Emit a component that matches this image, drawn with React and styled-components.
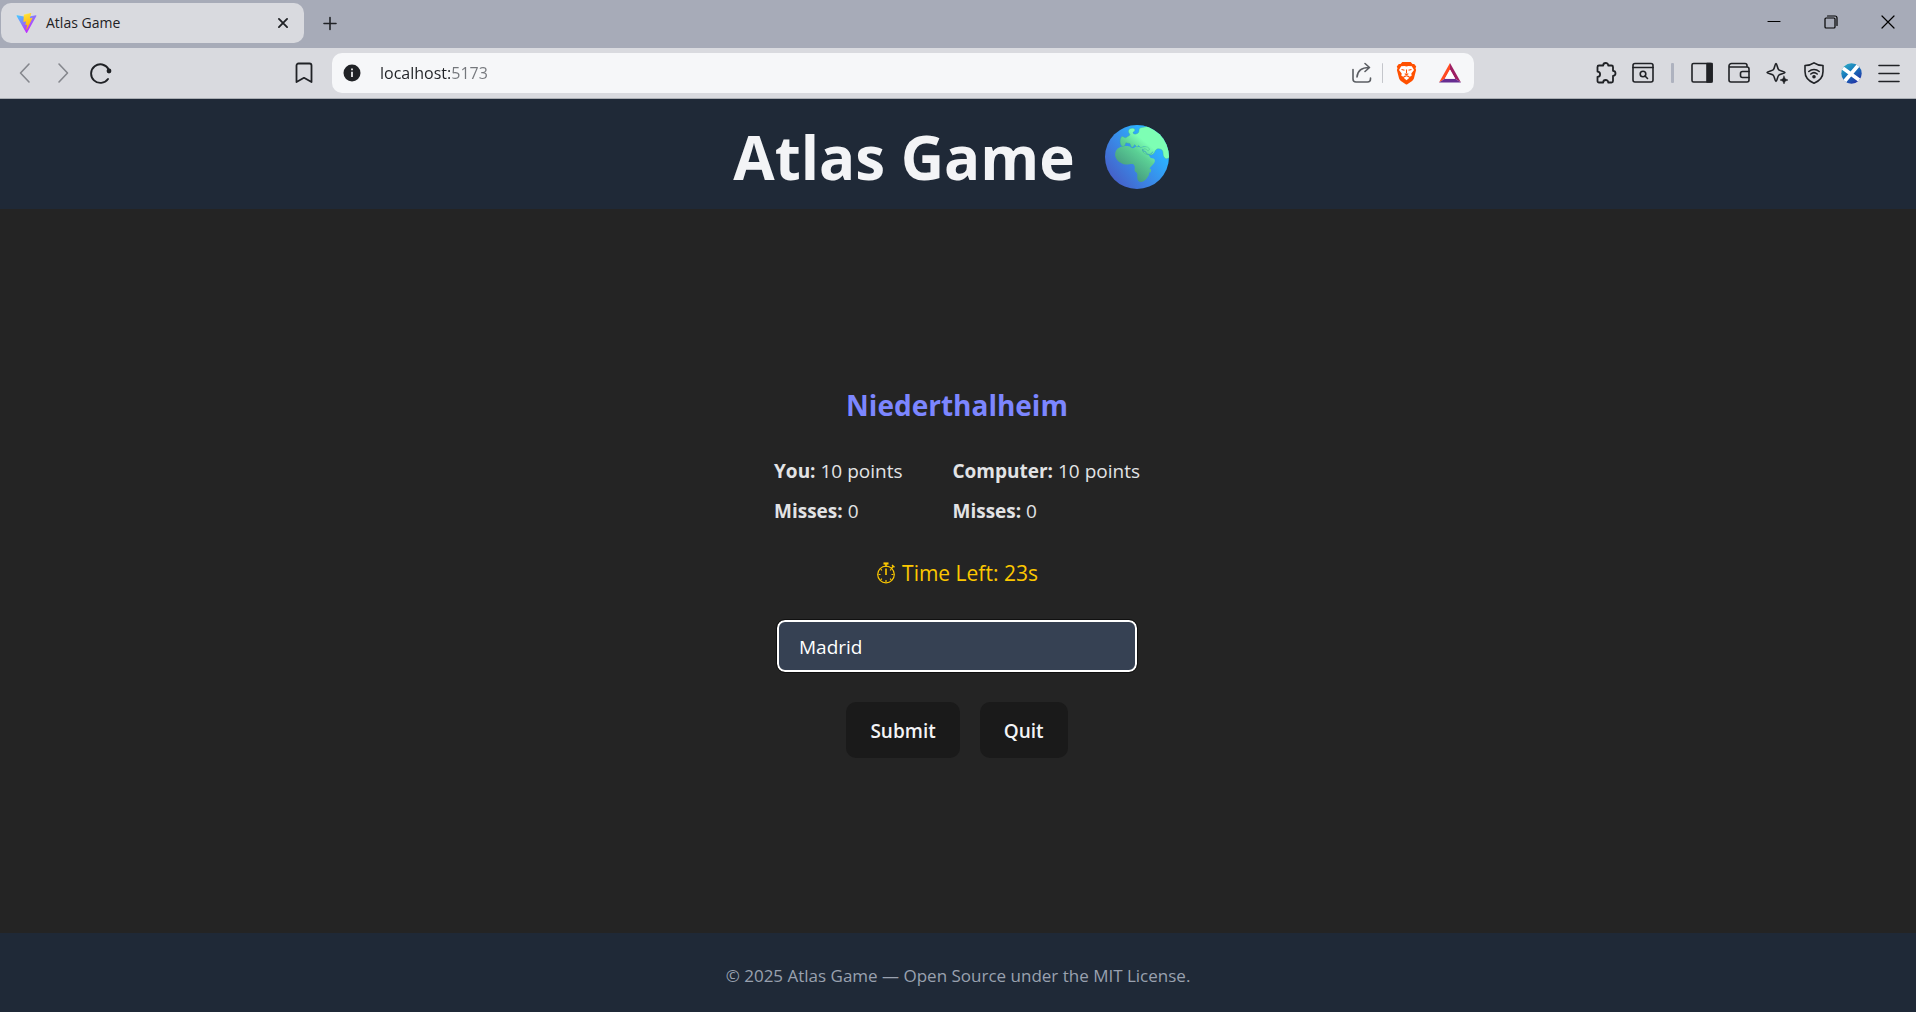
import React, { useState } from "react";
import styled, { createGlobalStyle } from "styled-components";

const GlobalStyle = createGlobalStyle`
  * { box-sizing: border-box; }
  body {
    margin: 0;
    background: #242424;
    color: #e2e3e5;
    font-family: "Open Sans", "Noto Sans", sans-serif;
    font-size: 19px;
    line-height: 30px;
  }
  button, input { font-family: inherit; }
`;

const Window = styled.div`
  display: flex;
  flex-direction: column;
  min-height: 100vh;
`;

/* ---------- browser chrome ---------- */

const TabStrip = styled.div`
  display: flex;
  align-items: center;
  height: 48px;
  padding-left: 1px;
  background: #a7abb8;
`;

const Tab = styled.div`
  display: flex;
  align-items: center;
  gap: 9px;
  width: 303px;
  height: 40px;
  margin-bottom: 2px;
  padding: 0 11px 0 15px;
  border-radius: 10px;
  background: #d9dadf;
`;

const TabTitle = styled.span`
  flex: 1;
  color: #1f2124;
  font-size: 14px;
  line-height: 20px;
`;

const IconButton = styled.button`
  display: flex;
  align-items: center;
  justify-content: center;
  flex: ${(p) => (p.$width ? "none" : "1")};
  width: ${(p) => (p.$width ? `${p.$width}px` : "auto")};
  height: 32px;
  padding: 0;
  border: 0;
  background: none;
  color: ${(p) => p.$color || "#202226"};
  cursor: pointer;
  svg { display: block; }
`;

const WindowControls = styled.div`
  display: flex;
  margin: 0 0 4px auto;
`;

const Toolbar = styled.div`
  display: flex;
  align-items: center;
  height: 51px;
  border-bottom: 1px solid #a9adb3;
  background: #d9dadf;
`;

const LeftTools = styled.div`
  display: flex;
  justify-content: space-between;
  width: 332px;
  padding: 0 10px 0 6px;
`;

const RightTools = styled.div`
  display: flex;
  align-items: center;
  justify-content: flex-end;
  width: 442px;
  padding-right: 8px;
`;

const ToolGroup = styled.div`
  display: flex;
  width: ${(p) => p.$width}px;
`;

const AddressBar = styled.div`
  display: flex;
  flex: 1;
  align-items: center;
  height: 40px;
  padding: 0 2px;
  border-radius: 10px;
  background: #f6f7f9;
`;

const AddressInput = styled.input`
  flex: 1;
  min-width: 0;
  padding: 0 0 0 10px;
  border: 0;
  outline: 0;
  background: linear-gradient(90deg, #202226 80px, #74777c 80px);
  -webkit-background-clip: text;
  background-clip: text;
  color: transparent;
  font-size: 16px;
  line-height: 24px;
`;

const Divider = styled.span`
  width: ${(p) => (p.$thick ? 3 : 1)}px;
  height: 20px;
  margin: 0 ${(p) => (p.$thick ? 9 : 1)}px;
  border-radius: 1px;
  background: ${(p) => (p.$thick ? "#aeb2bf" : "#c4c6cb")};
`;

/* ---------- page ---------- */

const Header = styled.header`
  display: flex;
  align-items: center;
  justify-content: center;
  padding: 18px 20px 12px;
  background: #1f2937;
`;

const Title = styled.h1`
  display: flex;
  align-items: center;
  gap: 30px;
  margin: 0;
  padding-right: 14px;
  color: #f3f4f6;
  font-size: 60px;
  font-weight: 700;
  line-height: 80px;
  svg { display: block; }
`;

const Main = styled.main`
  display: flex;
  flex: 1;
  flex-direction: column;
  align-items: center;
  justify-content: center;
  padding-right: 2px;
`;

const Game = styled.form`
  display: flex;
  flex-direction: column;
  align-items: center;
  gap: 30px;
`;

const Place = styled.h2`
  margin: 0;
  color: #7c86ff;
  font-size: 28px;
  font-weight: 700;
  line-height: 42px;
`;

const Scores = styled.div`
  display: flex;
  gap: 50px;
`;

const Player = styled.div`
  display: flex;
  flex-direction: column;
  gap: 10px;
`;

const Stat = styled.p`
  margin: 0;
`;

const Timer = styled.p`
  display: flex;
  align-items: center;
  gap: 6px;
  margin: 0;
  color: #fcc800;
  font-size: 21px;
  line-height: 34px;
`;

const Answer = styled.input`
  width: 360px;
  height: 52px;
  padding: 2px 20px 0;
  border: 2px solid #ffffff;
  border-radius: 8px;
  outline: 1px solid #101010;
  background: #364153;
  color: #ffffff;
  font-size: 19px;
`;

const Actions = styled.div`
  display: flex;
  gap: 20px;
`;

const ActionButton = styled.button`
  height: 56px;
  padding: 2px 24px 0;
  border: 0;
  border-radius: 10px;
  background: #1a1a1a;
  color: #f3f4f6;
  font-size: 19px;
  font-weight: 600;
  cursor: pointer;
`;

const Footer = styled.footer`
  padding: 28px 20px 21px;
  background: #1f2937;
  color: #99a1af;
  font-size: 17px;
  text-align: center;
`;

/* ---------- drawings ---------- */

const Line = ({ size = 22, width = 1.6, children }) => (
  <svg width={size} height={size} viewBox="0 0 22 22" fill="none" stroke="currentColor" strokeWidth={width} strokeLinecap="round" strokeLinejoin="round" aria-hidden="true">
    {children}
  </svg>
);

const ViteLogo = () => (
  <svg width="21" height="20" viewBox="0 0 256 257" aria-hidden="true">
    <defs>
      <linearGradient id="viteBody" x1="0" y1="0" x2="0.6" y2="0.8">
        <stop offset="0" stopColor="#41d1ff" />
        <stop offset="1" stopColor="#bd34fe" />
      </linearGradient>
      <linearGradient id="viteBolt" x1="0.4" y1="0" x2="0.6" y2="1">
        <stop offset="0" stopColor="#ffea83" />
        <stop offset="0.1" stopColor="#ffdd35" />
        <stop offset="1" stopColor="#ffa800" />
      </linearGradient>
    </defs>
    <path fill="url(#viteBody)" d="M255.153 37.938 134.897 252.976c-2.483 4.44-8.862 4.466-11.382.048L.875 37.958c-2.746-4.814 1.371-10.646 6.827-9.67l120.385 21.517a6.537 6.537 0 0 0 2.322-.004l117.867-21.483c5.438-.991 9.574 4.796 6.877 9.62Z" />
    <path fill="url(#viteBolt)" d="M185.432.063 96.44 17.501a3.268 3.268 0 0 0-2.634 3.014l-5.474 92.456a3.268 3.268 0 0 0 3.997 3.378l24.777-5.718c2.318-.535 4.413 1.507 3.936 3.838l-7.361 36.047c-.495 2.426 1.782 4.5 4.151 3.78l15.304-4.649c2.372-.72 4.652 1.36 4.15 3.788l-11.698 56.621c-.732 3.542 3.979 5.473 5.943 2.437l1.313-2.028 72.516-144.72c1.215-2.423-.88-5.186-3.54-4.672l-25.505 4.922c-2.396.462-4.435-1.77-3.759-4.114l16.646-57.705c.677-2.35-1.37-4.583-3.769-4.113Z" />
  </svg>
);

const BraveLogo = () => (
  <svg width="21" height="24" viewBox="0 0 21 24" aria-hidden="true">
    <path fill="#ff5000" d="M6.3 1h8.4l1.8 2 1.7-.1 2 2.5-.7 1.8.6 1.9-2.2 8.5c-.3 1-1 1.8-1.8 2.4L11.3 23.3c-.5.3-1.1.3-1.6 0L4.9 20c-.9-.6-1.5-1.4-1.8-2.4L.9 9.1l.6-1.9L.8 5.4l2-2.5 1.7.1z" />
    <path fill="#fff" d="m10.5 5.6 2-.5 3.3.2 2.2 3.7-2.7 3.500.4 2.200-2 1.100-1.700-1.200h-3l-1.700 1.200-2-1.100.4-2.200L3 9l2.200-3.700 3.300-.2zm0 9.600 2.900 1.600-2.900 2.500-2.900-2.500z" />
    <path d="m5.500 8.500 3 .8M15.500 8.500l-3 .8M10.500 8.500v4M8.700 12.600l1.800 1.200 1.800-1.200" fill="none" stroke="#ff5000" strokeWidth="1.100" />
  </svg>
);

const BatLogo = () => (
  <svg width="22" height="20" viewBox="0 0 22 20" aria-hidden="true">
    <path fill="#ff4a22" d="M11 0v6.500L5.800 15.800 0 19.500z" />
    <path fill="#9e1f63" d="M11 0v6.500l5.200 9.300 5.800 3.700z" />
    <path fill="#662d91" d="M0 19.500 5.800 15.800h10.400l5.800 3.700z" />
    <path fill="#fff" d="m11 6.500 5.200 9.300H5.800z" />
  </svg>
);

const SaltireLogo = () => (
  <svg width="21" height="21" viewBox="0 0 21 21" aria-hidden="true">
    <defs>
      <linearGradient id="saltire" x1="0" y1="0" x2="0.7" y2="1">
        <stop offset="0" stopColor="#35b9c9" />
        <stop offset="0.5" stopColor="#1678bb" />
        <stop offset="1" stopColor="#2432a6" />
      </linearGradient>
      <clipPath id="saltireDisc"><circle cx="10.5" cy="10.5" r="10.2" /></clipPath>
    </defs>
    <g clipPath="url(#saltireDisc)">
      <rect width="21" height="21" fill="url(#saltire)" />
      <path d="M1 4.500 19.500 18M17.500 2 3 19" stroke="#fff" strokeWidth="3.600" />
    </g>
  </svg>
);

const Stopwatch = () => (
  <svg width="20" height="22" viewBox="0 0 20 22" fill="none" stroke="currentColor" strokeWidth="1.200" aria-hidden="true">
    <circle cx="10" cy="12.500" r="8.300" />
    <path d="M7.500 1.500h5" strokeWidth="2.200" />
    <path d="M10 2v3M10 6.500V13" strokeWidth="1.600" />
    <path d="m15.300 6.500 2-2.200M16 3l2.500 2.200" strokeWidth="1.400" />
    <path d="M10 18v2M2.500 12.500h2M15.500 12.500h2M4.700 7.200l1.200 1.200M15.300 7.200l-1.200 1.200M4.700 17.800l1.200-1.200M15.300 17.800l-1.200-1.200" />
  </svg>
);

const Globe = () => (
  <svg width="64" height="64" viewBox="43 32 190 190" role="img" aria-label="Globe showing Europe and Africa">
    <defs>
      <linearGradient id="ocean" x1="0.2" y1="0.95" x2="0.85" y2="0.4">
        <stop offset="0" stopColor="#4560c8" />
        <stop offset="0.5" stopColor="#3a88e6" />
        <stop offset="1" stopColor="#2cb1ff" />
      </linearGradient>
      <linearGradient id="land" gradientUnits="userSpaceOnUse" x1="105" y1="175" x2="185" y2="75">
        <stop offset="0" stopColor="#45997f" />
        <stop offset="0.55" stopColor="#5bd095" />
        <stop offset="0.85" stopColor="#7dffb4" />
      </linearGradient>
      <clipPath id="disc"><circle cx="138" cy="127" r="95" /></clipPath>
    </defs>
    <g clipPath="url(#disc)">
      <rect x="43" y="32" width="190" height="190" fill="url(#ocean)" />
      <g fill="url(#land)">
        <path d="M73 120c0-9 5-18 13-21 8-4 18-5 27-4 6 0 6 5 12 6 6 0 7-5 13-5 6 1 8 3 14 2l26-6 10 20-16 6c3 6 5 13 11 13 6 1 8 3 8 8 0 8-13 16-16 24-2 8 1 16-5 23-4 7-9 14-19 15-7 1-11-3-12-10-1-6 2-12-2-17-2-4-6-3-6-8 0-7 2-12-3-17-5-4-14 1-24 0-14-1-31-14-31-29Z" />
        <path d="M89 88c-2-8-1-15 2-20 4-4 8 1 12 2 4 0 6-4 10-5 4-2 5-5 2-8-4-4-3-11 2-14 6-3 15-2 15 4 0 5-7 5-6 9 2 5 12 4 16-1 4-6 0-11 5-14 8-3 15-2 22-6l74 40v50l-16 7c-5 1-9-4-11-10-1-8 0-15-7-18-6-3-13-2-16 3-3 6-5 13-14 14-10 1-22-4-24-11-1-5 4-8 8-7 4 0 5 6 9 5 5-1 3-8-2-10-9-4-14-1-21 1l-7-6-4 5-7-8-5 8-5-1-4-10-12-2-4 9c-3 3-11 2-12-6Z" stroke="#3fae8c" strokeWidth="1" />
        <path d="M174 163c4-3 6 0 6 4s-3 9-6 6z" />
      </g>
      <path d="M155 103c-2 5 2 8 6 7 3-1 3 7 9 9 6 2 13-2 15-8" fill="none" stroke="#3593c8" strokeWidth="2" />
    </g>
  </svg>
);

function BrowserChrome() {
  const [url, setUrl] = useState("localhost:5173");
  return (
    <>
      <TabStrip>
        <Tab>
          <ViteLogo />
          <TabTitle>Atlas Game</TabTitle>
          <IconButton $width={20} aria-label="Close tab"><Line width={2}><path d="m6.500 6.500 9 9M15.500 6.500l-9 9" /></Line></IconButton>
        </Tab>
        <IconButton $width={52} aria-label="New tab"><Line><path d="M11 4.500v12M5 10.500h12" /></Line></IconButton>
        <WindowControls>
          <IconButton $width={57} $color="#000" aria-label="Minimize"><Line width={1.2}><path d="M5 10.500h12" /></Line></IconButton>
          <IconButton $width={57} $color="#000" aria-label="Restore"><Line width={1.2}><rect x="5" y="7" width="10" height="10" rx="1" /><path d="M7.500 5h7.500q2 0 2 2v7.500" /></Line></IconButton>
          <IconButton $width={57} $color="#000" aria-label="Close"><Line width={1.2}><path d="m5 5 12 12M17 5 5 17" /></Line></IconButton>
        </WindowControls>
      </TabStrip>
      <Toolbar>
        <LeftTools>
          <ToolGroup $width={114}>
            <IconButton $color="#85878d" aria-label="Back"><Line><path d="M15 2 6.500 11l8.500 9" /></Line></IconButton>
            <IconButton $color="#85878d" aria-label="Forward"><Line><path d="m7 2 8.500 9L7 20" /></Line></IconButton>
            <IconButton aria-label="Reload"><Line><path d="M18.500 7A9.300 9.300 0 1 0 18 17" strokeWidth="1.900" /><circle cx="19" cy="9" r="2.400" fill="currentColor" stroke="none" /></Line></IconButton>
          </ToolGroup>
          <IconButton $width={37} aria-label="Bookmark"><Line><path d="M5.500 1.500h11a2 2 0 0 1 2 2V20l-7.500-4.200L3.500 20V3.500a2 2 0 0 1 2-2Z" strokeWidth="1.800" /></Line></IconButton>
        </LeftTools>
        <AddressBar>
          <IconButton $width={36} aria-label="Site information">
            <svg width="18" height="18" viewBox="0 0 18 18" aria-hidden="true"><circle cx="9" cy="9" r="8.500" fill="#202226" /><path d="M9 7.800v5.200M9 4.500v1.800" stroke="#e8e9ec" strokeWidth="1.800" /></svg>
          </IconButton>
          <AddressInput aria-label="Address" value={url} onChange={(e) => setUrl(e.target.value)} />
          <IconButton $width={38} $color="#5b5e63" aria-label="Share"><Line><path d="M2 7.500V17a3 3 0 0 0 3 3h11.500a3 3 0 0 0 3-3v-1M6 15c.500-5.500 4-9.500 12-9.500M14 1.500l4.500 4L14 9.500" /></Line></IconButton>
          <Divider />
          <IconButton $width={44} aria-label="Brave Shields"><BraveLogo /></IconButton>
          <IconButton $width={44} aria-label="Brave Rewards"><BatLogo /></IconButton>
        </AddressBar>
        <RightTools>
          <ToolGroup $width={75}>
            <IconButton aria-label="Extensions"><Line width={1.8}><path d="M4 3.500h4.200a2.500 2.500 0 0 1 5 0h3.300a1.500 1.500 0 0 1 1.500 1.500v3.800a2.500 2.500 0 0 1 0 5v5.200a1.500 1.500 0 0 1-1.500 1.500h-3.300a2.500 2.500 0 0 0-5 0H4A1.500 1.500 0 0 1 2.500 19v-4.200a2.600 2.600 0 0 0 0-5.200V5A1.500 1.500 0 0 1 4 3.500Z" /></Line></IconButton>
            <IconButton aria-label="Search tabs"><Line><rect x="1" y="1.500" width="20" height="18.500" rx="2" /><path d="M1 5.500h20" /><circle cx="11" cy="12" r="2.800" /><path d="m13 14 2.500 2.500" /></Line></IconButton>
          </ToolGroup>
          <Divider $thick />
          <ToolGroup $width={225}>
            <IconButton aria-label="Sidebar"><Line><rect x="1" y="1.500" width="20" height="18.500" rx="1.500" /><path fill="currentColor" d="M16 1.500h5V20h-5z" /></Line></IconButton>
            <IconButton aria-label="Wallet"><Line><path d="M19 5V3.500a2 2 0 0 0-2-2H3.500A2.500 2.500 0 0 0 1 4v14a2 2 0 0 0 2 2h16a2 2 0 0 0 2-2V7a2 2 0 0 0-2-2H2" /><path d="M21 9.500h-6.500a2 2 0 0 0-2 2v2a2 2 0 0 0 2 2H21" /></Line></IconButton>
            <IconButton aria-label="Leo AI"><Line><path d="M10 1.500c1 0 1.400 5 2.700 6.300S19 9.500 19 10.500s-5 1.400-6.300 2.700S11 19.500 10 19.500s-1.400-5-2.700-6.300S1 11.500 1 10.500s5-1.400 6.300-2.700S9 1.500 10 1.500Z" /><path fill="currentColor" strokeWidth="0.500" d="m18 14 1.200 2.800L22 18l-2.800 1.200L18 22l-1.200-2.800L14 18l2.800-1.200z" /></Line></IconButton>
            <IconButton aria-label="VPN"><Line><path d="M11 .8c2.500 1.800 5.500 2.600 9 2.700v6c0 5.500-3.500 9.500-9 11.700-5.500-2.200-9-6.200-9-11.700v-6c3.500-.1 6.500-.9 9-2.700Z" /><path d="M5.800 9.500c3-2.700 7.400-2.700 10.400 0M7.800 12c1.900-1.600 4.500-1.600 6.400 0" /><circle cx="11" cy="14.800" r="1" fill="currentColor" /></Line></IconButton>
            <IconButton aria-label="Profile"><SaltireLogo /></IconButton>
            <IconButton aria-label="Menu"><Line><path d="M1 3.500h20M1 11.500h20M1 19.500h20" /></Line></IconButton>
          </ToolGroup>
        </RightTools>
      </Toolbar>
    </>
  );
}

export default function App() {
  const [answer, setAnswer] = useState("Madrid");
  return (
    <Window>
      <GlobalStyle />
      <BrowserChrome />
      <Header>
        <Title>Atlas Game <Globe /></Title>
      </Header>
      <Main>
        <Game onSubmit={(e) => e.preventDefault()}>
          <Place>Niederthalheim</Place>
          <Scores>
            <Player>
              <Stat><strong>You:</strong> 10 points</Stat>
              <Stat><strong>Misses:</strong> 0</Stat>
            </Player>
            <Player>
              <Stat><strong>Computer:</strong> 10 points</Stat>
              <Stat><strong>Misses:</strong> 0</Stat>
            </Player>
          </Scores>
          <Timer><Stopwatch />Time Left: 23s</Timer>
          <Answer aria-label="Your answer" value={answer} onChange={(e) => setAnswer(e.target.value)} />
          <Actions>
            <ActionButton type="submit">Submit</ActionButton>
            <ActionButton type="button">Quit</ActionButton>
          </Actions>
        </Game>
      </Main>
      <Footer>© 2025 Atlas Game — Open Source under the MIT License.</Footer>
    </Window>
  );
}
